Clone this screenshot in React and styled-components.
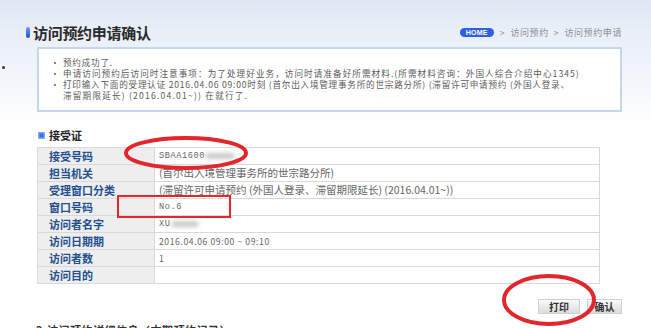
import React from "react";
import styled, { createGlobalStyle } from "styled-components";

const Global = createGlobalStyle`
  html, body { margin: 0; padding: 0; background: #fff; }
  body { font-family: "Noto Sans CJK SC", "Noto Sans", sans-serif; }
`;

const Page = styled.div`
  position: relative;
  width: 651px;
  height: 328px;
  overflow: hidden;
  box-sizing: border-box;
  padding: 22px 29px 0 26px;
  background: linear-gradient(180deg, #dfe7f3 0px, #e9eef7 30px, #f3f6fb 80px, #ffffff 125px);
`;

const EdgeDot = styled.span`
  position: absolute;
  left: 2px;
  top: 66px;
  width: 3px;
  height: 3px;
  border-radius: 50%;
  background: #333;
`;

const Header = styled.div`
  display: flex;
  align-items: center;
  justify-content: space-between;
  height: 20px;
`;

const Title = styled.h1`
  display: flex;
  align-items: center;
  gap: 3px;
  margin: 0;
  font-size: 15px;
  font-weight: 700;
  color: #2b2b2b;
  letter-spacing: -0.3px;
  &::before {
    content: "";
    width: 4px;
    height: 11px;
    border-radius: 2px;
    background: linear-gradient(180deg, #6f9cf5, #1f4fd6);
  }
`;

const Crumbs = styled.div`
  display: flex;
  align-items: center;
  gap: 5px;
  font-size: 9px;
  color: #8a8f99;
  letter-spacing: 0.6px;
`;

const HomePill = styled.span`
  display: inline-flex;
  align-items: center;
  justify-content: center;
  width: 34px;
  height: 9px;
  border-radius: 5px;
  background: #2f5fe3;
  color: #fff;
  font-family: "Liberation Sans", Arial, sans-serif;
  font-size: 7px;
  font-weight: 700;
  letter-spacing: 0.2px;
  margin-right: 1px;
`;

const Notice = styled.ul`
  margin: 5px 0 0 11px;
  padding: 8px 0 9px 14px;
  list-style: none;
  background: #fff;
  border: 2px solid #c6d6f0;
  font-size: 8.6px;
  line-height: 11px;
  color: #5b5b5b;
`;

const NoticeItem = styled.li`
  position: relative;
  padding-left: 10px;
  white-space: nowrap;
  letter-spacing: ${(p) => p.$ls || 0.75}px;
  &::before {
    content: "";
    position: absolute;
    left: 1px;
    top: 5px;
    width: 2px;
    height: 2px;
    background: #888;
  }
`;

const WideLine = styled.span`
  letter-spacing: 1.2px;
`;

const Section = styled.h2`
  display: flex;
  align-items: center;
  gap: 4px;
  margin: 16px 0 5px 12px;
  font-size: 11px;
  font-weight: 700;
  color: #222;
  line-height: 14px;
  &::before {
    content: "";
    width: 7px;
    height: 7px;
    border-radius: 2px;
    background: #3a6fe0;
    box-shadow: inset 0 0 0 1.5px #7fa6f2;
  }
`;

const Table = styled.table`
  margin-left: 11px;
  width: 563px;
  border-collapse: collapse;
  table-layout: fixed;
`;

const Label = styled.th`
  width: 105px;
  height: 16px;
  padding: 0 0 0 11px;
  text-align: left;
  background: #eeeeee;
  border: 1px solid #d9d9d9;
  color: #24508f;
  font-size: 11px;
  font-weight: 700;
  line-height: 16px;
  white-space: nowrap;
`;

const Value = styled.td`
  height: 16px;
  padding: 0 0 0 4px;
  border: 1px solid #d9d9d9;
  color: #666;
  font-size: ${(p) => (p.$big ? "10.5px" : "8.6px")};
  letter-spacing: ${(p) => (p.$big ? "0" : "0.6px")};
  font-family: ${(p) =>
    p.$mono ? '"Liberation Mono", "Noto Sans CJK SC", monospace' : '"Noto Sans CJK SC", sans-serif'};
  line-height: 16px;
  white-space: nowrap;
  overflow: hidden;
`;

const Blur = styled.span`
  display: inline-block;
  width: ${(p) => p.$w}px;
  height: 6px;
  margin-left: 1px;
  vertical-align: middle;
  background: #c9c9c9;
  filter: blur(2px);
`;

const Buttons = styled.div`
  display: flex;
  justify-content: flex-end;
  gap: 7px;
  width: 596px;
  margin-top: 15px;
`;

const Button = styled.button`
  box-sizing: border-box;
  height: 15px;
  width: ${(p) => p.$w}px;
  padding: 0;
  border: 1px solid #cfcfcf;
  background: linear-gradient(180deg, #fafafa, #dcdcdc);
  font-family: "Noto Sans CJK SC", sans-serif;
  font-size: 10px;
  font-weight: 700;
  color: #333;
  line-height: 12px;
`;

const Footer = styled.div`
  margin: 8px 0 0 10px;
  font-size: 11px;
  font-weight: 700;
  color: #333;
  letter-spacing: 0.5px;
`;

const Mark = styled.svg`
  position: absolute;
  left: 0;
  top: 0;
  pointer-events: none;
`;

const rows = [
  ["接受号码", <>SBAA1600<Blur $w={28} /></>, { mono: true }],
  ["担当机关", "(首尔出入境管理事务所的世宗路分所)", { big: true }],
  ["受理窗口分类", "(滞留许可申请预约 (外国人登录、滞留期限延长) (2016.04.01~))", { big: true }],
  ["窗口号码", "No.6", { mono: true }],
  ["访问者名字", <>XU<Blur $w={26} /></>, { mono: true }],
  ["访问日期期", "2016.04.06 09:00 ~ 09:10", {}],
  ["访问者数", "1", {}],
  ["访问目的", "", {}],
];

export default function App() {
  return (
    <>
      <Global />
      <Page>
        <EdgeDot />
        <Header>
          <Title>访问预约申请确认</Title>
          <Crumbs>
            <HomePill>HOME</HomePill>
            <span>&gt;</span>
            <span>访问预约</span>
            <span>&gt;</span>
            <span>访问预约申请</span>
          </Crumbs>
        </Header>
        <Notice>
          <NoticeItem>预约成功了.</NoticeItem>
          <NoticeItem $ls={1.05}>
            申请访问预约后访问时注意事项：为了处理好业务，访问时请准备好所需材料.(所需材料咨询：外国人综合介绍中心1345)
          </NoticeItem>
          <NoticeItem $ls={0.77}>
            打印输入下面的受理认证 2016.04.06 09:00时刻 (首尔出入境管理事务所的世宗路分所) (滞留许可申请预约 (外国人登录、
            <br />
            <WideLine>滞留期限延长) (2016.04.01~)) 在就行了.</WideLine>
          </NoticeItem>
        </Notice>
        <Section>接受证</Section>
        <Table>
          <tbody>
            {rows.map(([k, v, o]) => (
              <tr key={k}>
                <Label>{k}</Label>
                <Value $big={o.big} $mono={o.mono}>{v}</Value>
              </tr>
            ))}
          </tbody>
        </Table>
        <Buttons>
          <Button $w={42}>打印</Button>
          <Button $w={35}>确认</Button>
        </Buttons>
        <Footer>2.访问预约详细信息（本期预约记录）</Footer>
        <Mark width="651" height="328">
          <ellipse cx="186" cy="153" rx="60" ry="15" fill="none" stroke="#e3262b" strokeWidth="4" />
          <rect x="118" y="196" width="112" height="21" fill="none" stroke="#e3262b" strokeWidth="2" />
          <ellipse cx="549" cy="300" rx="45" ry="24" fill="none" stroke="#e3262b" strokeWidth="4" />
        </Mark>
      </Page>
    </>
  );
}
